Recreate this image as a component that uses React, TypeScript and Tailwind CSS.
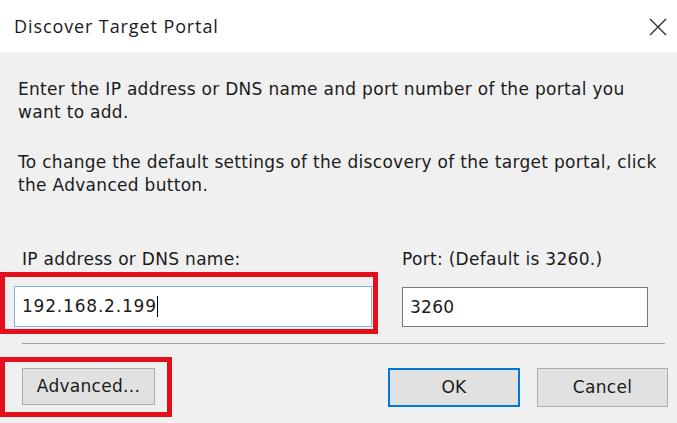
import React from 'react';

export default function App() {
  const body = "font-['DejaVu_Sans',Verdana,sans-serif] text-[17px] leading-[23px] tracking-[0.3px] text-[#1b1b1b]";

  return (
    <div className="w-[677px] h-[423px] bg-[#f0f0f0] flex flex-col overflow-hidden">
      {/* title bar */}
      <div className="h-[52px] bg-white flex items-center justify-between pl-[14px] pr-[9px] shrink-0">
        <span className="font-['Open_Sans',sans-serif] text-[18px] tracking-[0.9px] text-[#1a1a1a]">Discover Target Portal</span>
        <svg width="20" height="20" viewBox="0 0 20 20" className="mt-[1px]">
          <path d="M2 2 L18 18 M18 2 L2 18" stroke="#2b2b2b" strokeWidth="1.3" fill="none" />
        </svg>
      </div>

      <div className={`flex flex-col pt-[26px] ${body}`}>
        <p className="pl-[18px] whitespace-nowrap">
          Enter the IP address or DNS name and port number of the portal you
          <br />
          want to add.
        </p>
        <p className="pl-[18px] mt-[27px] whitespace-nowrap">
          To change the default settings of the discovery of the target portal, click
          <br />
          the Advanced button.
        </p>

        <div className="flex items-start gap-[24px] mt-[51px]">
          <div className="flex flex-col w-[378px]">
            <label className="pl-[22px]">IP address or DNS name:</label>
            <div className="mt-[1px] border-[5px] border-[#e3101c] pl-[9px] pt-[9px] pb-[2px]">
              <div className="w-[358px] h-[41px] bg-white border border-[#7eb4ea] flex items-center pl-[7px] tracking-[0.8px]">
                <span>192.168.2.199</span>
                <span className="w-px h-[21px] bg-black" />
              </div>
            </div>
          </div>
          <div className="flex flex-col">
            <label>Port: (Default is 3260.)</label>
            <div className="mt-[16px] w-[246px] h-[40px] bg-white border border-[#7a7a7a] flex items-center pl-[7px]">
              3260
            </div>
          </div>
        </div>

        <div className="ml-[22px] mt-[9px] w-[643px] h-px bg-[#a0a0a0]" />

        <div className="flex items-start mt-[13px]">
          <div className="border-[5px] border-[#e3101c] pl-[17px] pt-[6px] pr-[12px] pb-[7px]">
            <button className="w-[133px] h-[37px] bg-[#e1e1e1] border border-[#adadad] text-[#1b1b1b]">
              Advanced...
            </button>
          </div>
          <button className="ml-[216px] mt-[11px] w-[132px] h-[39px] bg-[#e1e1e1] border-2 border-[#0078d7] text-[#1b1b1b]">
            OK
          </button>
          <button className="ml-[17px] mt-[11px] w-[131px] h-[39px] bg-[#e1e1e1] border border-[#adadad] text-[#1b1b1b]">
            Cancel
          </button>
        </div>
      </div>
    </div>
  );
}
